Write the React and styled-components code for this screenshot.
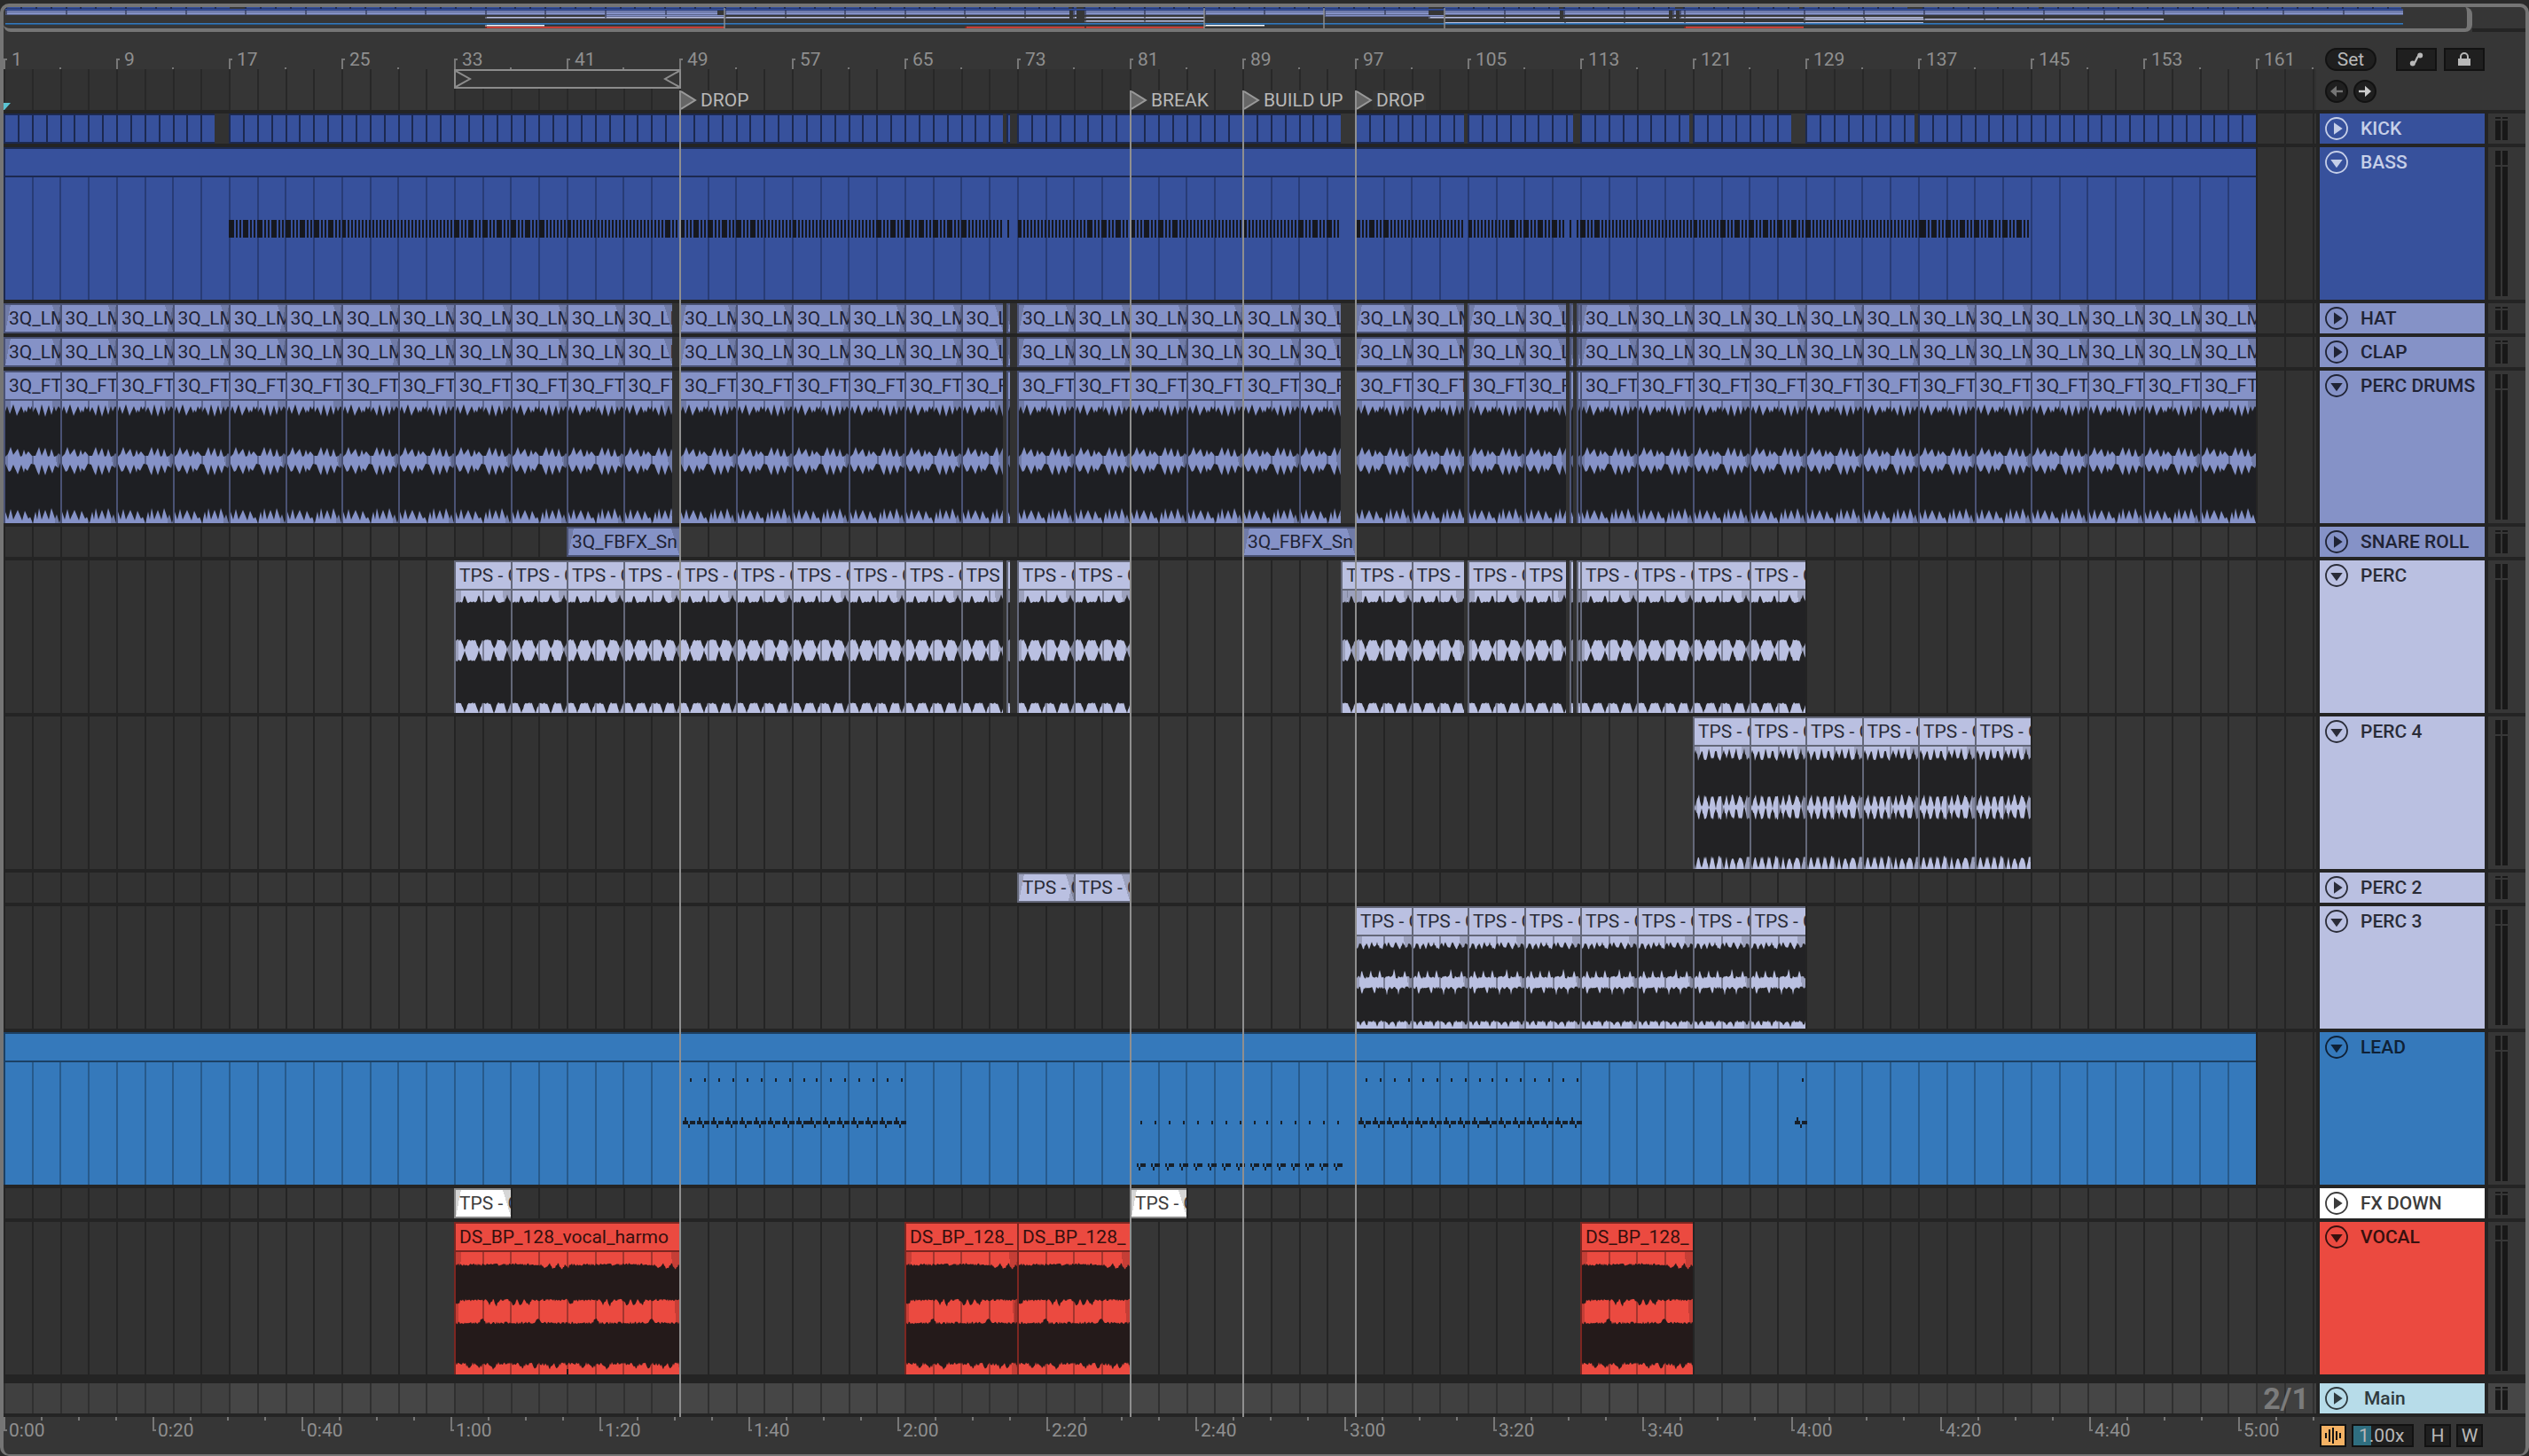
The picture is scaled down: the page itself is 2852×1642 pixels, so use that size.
import React from 'react';
import styled, { createGlobalStyle, css } from 'styled-components';

const VISIBLE_BARS = 164.28;
const BAR = 15.875;
const BARS_PER_20S = 10.583;

const frameGrey = '#757575';
const panel = '#363636';
const gapDark = '#242424';
const tickGrey = '#777777';
const textGrey = '#8f8f8f';
const textLight = '#b8b8b8';

const pct = bars => `${(bars / VISIBLE_BARS) * 100}%`;

const GlobalStyle = createGlobalStyle`
    * {
        box-sizing: border-box;
    }
    body {
        margin: 0;
        background: #2a2a2a;
        font-family: Roboto, "Liberation Sans", sans-serif;
        font-size: 21px;
    }
    button, input {
        margin: 0;
        padding: 0;
        font: inherit;
    }
`;

/* ---------- data ---------- */

const palette = {
    blue: { fill: '#37519c', edge: '#1c2950', line: '#283c76', text: '#c6cfe8', wave: '#16181f' },
    lavender: { fill: '#8592c7', edge: '#4a5274', line: '#5c668e', text: '#1f2335', wave: '#1e1f23' },
    pale: { fill: '#bac0e1', edge: '#646879', line: '#7c8097', text: '#2a2c38', wave: '#222224' },
    sky: { fill: '#3579bb', edge: '#1c4165', line: '#275a8b', text: '#0f2136', wave: '#17202a' },
    white: { fill: '#ffffff', edge: '#8a8a8a', line: '#8a8a8a', text: '#3c3c3c', wave: '#222222' },
    red: { fill: '#eb4a40', edge: '#7d2621', line: '#a3352e', text: '#36100e', wave: '#241a1a' },
    ice: { fill: '#b7dce9', edge: '#5f7379', line: '#5f7379', text: '#2f3a3e', wave: '#222222' },
};

const split = (ranges, step) => ranges.flatMap(([from, to]) => {
    const clips = [];
    for (let start = from; start < to; start += step) {
        clips.push({
            start,
            end: Math.min(start + step, to),
            first: start === from,
            last: start + step >= to,
        });
    }
    return clips;
});

const kickRanges = [
    [1, 16], [17, 72], [72.25, 72.5], [73, 96], [97, 104.75], [105, 112.5],
    [113, 120.75], [121, 128], [129, 136.75], [137, 161],
];
const hatRanges = [
    [1, 48.5], [49, 72], [72.25, 72.5], [73, 96], [97, 104.75], [105, 112],
    [112.25, 112.5], [112.75, 113], [113, 161],
];
const percRanges = [
    [33, 72], [72.25, 72.5], [73, 81], [96, 97], [97, 104.75], [105, 112],
    [112.25, 112.5], [112.75, 113], [113, 129],
];

const even = x => Math.round(x / 2) * 2;
const barX = bar => (bar - 1) * BAR;

const bassNotes = () => {
    const silent = [[72, 72.25], [72.5, 73], [96, 97], [104.75, 105], [112, 112.25], [112.5, 112.75]];
    const notes = [];
    for (let bar = 17; bar < 145; bar += 0.25) {
        if (silent.some(([a, b]) => bar >= a && bar < b)) {
            continue;
        }
        const x = even(barX(bar));
        const heavy = bar % 1 === 0 && (x - 255) % 238 < 116;
        notes.push([x, 48, heavy ? 6 : 2, 20]);
    }
    return notes;
};

const leadNotes = () => {
    const notes = [];
    const high = bar => {
        const x = even(barX(bar));
        notes.push([x + 12, 18, 2, 4], [x + 6, 62, 2, 4], [x + 4, 66, 6, 4], [x + 10, 70, 2, 4], [x + 12, 66, 6, 4]);
    };
    const low = bar => {
        const x = even(barX(bar));
        notes.push([x + 12, 66, 2, 4], [x + 8, 114, 2, 4], [x + 12, 114, 6, 4], [x + 10, 118, 2, 4]);
    };
    for (let i = 0; i < 16; i++) {
        high(49 + i);
        high(97 + i);
    }
    for (let i = 0; i < 15; i++) {
        low(81 + i);
    }
    high(128);
    return notes;
};

// An edge is either a list of points over one period, or
// [resting level, level at the tips, tip positions, tip half width, roughness]
const waves = {
    drums: {
        period: 64,
        height: 138,
        edges: [
            { points: [0, 12, 2, 6, 5, 15, 9, 4, 13, 17, 18, 6, 21, 14, 22, 10, 24, 13, 26, 6, 28, 10, 30, 6, 31, 13, 34, 7, 38, 17, 41, 4, 45, 18, 49, 5, 52, 16, 55, 6, 57, 12, 60, 6, 64, 12] },
            { points: [0, 63, 3, 60, 6, 52, 9, 61, 14, 54, 17, 63, 19, 62, 21, 55, 23, 61, 26, 57, 30, 62, 34, 62, 38, 52, 41, 62, 45, 53, 48, 63, 50, 62, 52, 54, 55, 63, 58, 62, 60, 59, 64, 63] },
            { points: [0, 71, 4, 80, 6, 79, 9, 72, 14, 83, 18, 72, 21, 81, 22, 76, 25, 79, 29, 71, 33, 72, 36, 80, 38, 84, 41, 72, 45, 84, 49, 72, 53, 82, 56, 73, 60, 76, 62, 70, 64, 71] },
            { points: [0, 125, 3, 134, 6, 122, 9, 134, 14, 123, 19, 135, 22, 124, 26, 133, 28, 131, 31, 138, 34, 125, 36, 134, 38, 121, 41, 134, 45, 123, 49, 134, 52, 121, 56, 133, 58, 128, 61, 138, 64, 125] },
        ],
    },
    perc: {
        period: 64,
        height: 138,
        edges: [
            [13, 5, [10, 26, 43, 58], 3, 2],
            [56, 66, [10, 26, 43, 58], 4, 2],
            [79, 68, [10, 26, 43, 58], 4, 2],
            [127, 138, [10, 26, 43, 58], 4, 2],
        ],
    },
    shaker: {
        period: 64,
        height: 138,
        edges: [
            [14, 3, [1, 8, 16, 24, 33, 39, 47, 56], 3, 4],
            [56, 68, [1, 8, 16, 24, 33, 39, 47, 56], 3, 4],
            [81, 69, [1, 8, 16, 24, 33, 39, 47, 56], 3, 4],
            [125, 138, [1, 8, 16, 24, 33, 39, 47, 56], 3, 4],
        ],
    },
    top: {
        period: 64,
        height: 104,
        edges: [
            [13, 7, [4, 11, 17, 23, 32, 36, 44, 52, 59], 3, 3],
            [46, 38, [6, 16, 26, 42, 54], 2, 3],
            [58, 65, [6, 20, 34, 47], 2, 3],
            [96, 101, [4, 11, 23, 36, 44, 59], 2, 3],
        ],
    },
    vocal: {
        period: 128,
        height: 138,
        edges: [
            [14, 19, [100, 110, 120, 127], 4, 3],
            [54, 60, [2, 38, 46, 65, 73, 82], 4, 3],
            [80, 74, [30, 93], 4, 3],
            [126, 131, [15, 27, 42, 75, 90, 106, 114], 4, 4],
        ],
    },
};

const noise = n => {
    const v = Math.sin(n * 127.1 + 11.7) * 43758.5453;
    return v - Math.floor(v) - 0.5;
};

const edgeLevel = (edge, x, seed) => {
    if (edge.points) {
        const p = edge.points;
        let i = 0;
        while (p[i + 2] < x) {
            i += 2;
        }
        return p[i + 1] + (p[i + 3] - p[i + 1]) * (x - p[i]) / (p[i + 2] - p[i]);
    }
    const [rest, tip, at, half, rough] = edge;
    const pull = Math.max(0, ...at.map(t => 1 - Math.abs(x - t) / half));
    return rest + (tip - rest) * pull + noise(x + seed * 300) * rough;
};

const wavePath = (wave, width) => {
    const band = (upper, lower) => {
        const there = [];
        const back = [];
        for (let x = 0; x <= width; x++) {
            const local = x % wave.period;
            there.push(`${x} ${edgeLevel(wave.edges[upper], local, upper).toFixed(1)}`);
            back.unshift(`${x} ${edgeLevel(wave.edges[lower], local, lower).toFixed(1)}`);
        }
        return `M${there.join('L')}L${back.join('L')}Z`;
    };
    return band(0, 1) + band(2, 3);
};

const tracks = [
    { name: 'KICK', color: 'blue', clips: split(kickRanges, 1) },
    { name: 'BASS', color: 'blue', open: true, body: 138, notes: bassNotes(), clips: split([[1, 161]], 160) },
    { name: 'HAT', color: 'lavender', label: '3Q_LM', fades: true, clips: split(hatRanges, 4) },
    { name: 'CLAP', color: 'lavender', label: '3Q_LM', fades: true, clips: split(hatRanges, 4) },
    { name: 'PERC DRUMS', color: 'lavender', label: '3Q_FT', fades: true, open: true, body: 138, wave: 'drums', clips: split(hatRanges, 4) },
    { name: 'SNARE ROLL', color: 'lavender', label: '3Q_FBFX_Sn', fades: true, clips: split([[41, 49], [89, 97]], 8) },
    { name: 'PERC', color: 'pale', label: 'TPS - C', fades: true, open: true, body: 138, wave: 'perc', clips: split(percRanges, 4) },
    { name: 'PERC 4', color: 'pale', label: 'TPS - C', fades: true, open: true, body: 138, wave: 'shaker', clips: split([[121, 145]], 4) },
    { name: 'PERC 2', color: 'pale', label: 'TPS - C', fades: true, clips: split([[73, 81]], 4) },
    { name: 'PERC 3', color: 'pale', label: 'TPS - C', fades: true, open: true, body: 104, wave: 'top', clips: split([[97, 129]], 4) },
    { name: 'LEAD', color: 'sky', open: true, body: 138, notes: leadNotes(), clips: split([[1, 161]], 160) },
    { name: 'FX DOWN', color: 'white', label: 'TPS - C', fades: true, clips: split([[33, 37], [81, 85]], 4) },
    {
        name: 'VOCAL',
        color: 'red',
        label: 'DS_BP_128_',
        fades: true,
        open: true,
        body: 138,
        wave: 'vocal',
        clips: [
            { start: 33, end: 49, first: true, last: true, label: 'DS_BP_128_vocal_harmo' },
            ...split([[65, 81], [113, 121]], 8),
        ],
    },
];

const locators = [
    { bar: 49, name: 'DROP' },
    { bar: 81, name: 'BREAK' },
    { bar: 89, name: 'BUILD UP' },
    { bar: 97, name: 'DROP' },
];

const barMarks = Array.from({ length: 21 }, (_, i) => 1 + i * 8);
const timeMarks = Array.from({ length: 16 }, (_, i) => {
    const s = i * 20;
    return `${Math.floor(s / 60)}:${String(s % 60).padStart(2, '0')}`;
});

/* ---------- frame and overview ---------- */

const Frame = styled.main`
    margin-top: 4px;
    border: 4px solid ${frameGrey};
    border-bottom-width: 2px;
    border-radius: 10px;
    background: ${panel};
    overflow: hidden;
`;

const Overview = styled.div`
    display: flex;
    height: 28px;
`;

const OverviewWindow = styled.div`
    position: relative;
    flex: 0 0 97.9%;
    display: grid;
    grid-auto-rows: 1fr;
    padding-left: 2px;
    border: solid ${frameGrey};
    border-width: 0 6px 4px 0;
    border-radius: 0 8px 8px 8px;
`;

const OverviewRest = styled.div`
    flex: 1;
    border-bottom: 4px solid ${gapDark};
`;

const OverviewRow = styled.div`
    display: flex;
    min-height: 0;
`;

const OverviewClip = styled.div`
    flex: none;
    border-left: ${props => props.$line ? '2px' : '0'} solid ${props => props.$color.edge};
    background: linear-gradient(${props => props.$color.fill} 60%, ${props => props.$color.line} 60%);
`;

const OverviewLocator = styled.div`
    position: absolute;
    top: 1px;
    bottom: 0;
    width: 2px;
    background: rgba(144, 144, 144, 0.7);
`;

/* ---------- shared grid ---------- */

const columns = css`
    display: grid;
    grid-template-columns: minmax(0, 1fr) 186px 42px;
    column-gap: 4px;
`;

const barGrid = (dark, light, line) => css`
    background:
        repeating-linear-gradient(to right, ${line} 0 2px, transparent 2px ${pct(2)}),
        repeating-linear-gradient(to right, ${dark} 0 ${pct(16)}, ${light} ${pct(16)} ${pct(32)});
`;

const Arrangement = styled.section`
    position: relative;
`;

/* ---------- top ruler ---------- */

const RulerRow = styled.header`
    ${columns}
    height: 88px;
`;

const Ruler = styled.div`
    position: relative;
    overflow: hidden;
    display: flex;
    flex-direction: column;
`;

const BarNumbers = styled.div`
    display: flex;
    align-items: flex-end;
    height: 42px;
`;

const BarMark = styled.div`
    flex: 0 0 ${pct(8)};
    display: flex;
    align-items: flex-end;
    gap: 5px;
    line-height: 22px;
    color: ${textGrey};
    background: linear-gradient(${tickGrey}, ${tickGrey}) 50% 100% / 2px 2px no-repeat;
`;

const BarTick = styled.i`
    width: 4px;
    height: 12px;
    border: solid ${tickGrey};
    border-width: 2px 0 0 2px;
`;

const RulerGrid = styled.div`
    flex: 1;
    ${barGrid('#323232', '#363636', '#282828')}
`;

const LoopBrace = styled.div`
    position: absolute;
    top: 42px;
    left: ${pct(32)};
    width: calc(${pct(16)} + 2px);
    height: 22px;
    display: flex;
    justify-content: space-between;
    border: 2px solid #8c8c8c;
    background: ${panel};
`;

const StartMarker = styled.svg`
    position: absolute;
    left: 0;
    bottom: 0;
`;

/* ---------- buttons at the right ---------- */

const Controls = styled.div`
    grid-column: 2 / 4;
    display: flex;
    flex-direction: column;
    gap: 10px;
    padding: 18px 0 0 6px;
`;

const ControlLine = styled.div`
    display: flex;
    gap: ${props => props.$gap};
`;

const DarkButton = styled.button`
    display: flex;
    align-items: center;
    justify-content: center;
    width: ${props => props.$width};
    height: 26px;
    margin-right: ${props => props.$push || '0'};
    border: 2px solid #121212;
    border-radius: ${props => props.$round ? '13px' : '0'};
    background: ${props => props.$on ? '#f5b264' : '#1f1f1f'};
    line-height: 22px;
    color: ${textLight};
`;

/* ---------- tracks ---------- */

const TrackList = styled.div`
    display: flex;
    flex-direction: column;
    gap: 4px;
    padding: 4px 0;
    background: ${gapDark};
`;

const TrackRow = styled.div`
    ${columns}
    margin-top: ${props => props.$main ? '6px' : '0'};
`;

const Lane = styled.div`
    display: flex;
    min-height: 34px;
    overflow: hidden;
    ${props => props.$main ? barGrid('#404040', '#464646', '#303030') : barGrid('#323232', '#363636', gapDark)}
`;

const fadeIn = 'linear-gradient(to bottom right, rgba(0, 0, 0, 0.16) 50%, transparent 50%) 0 0 / 6px 100% no-repeat';
const fadeOut = 'linear-gradient(to bottom left, rgba(0, 0, 0, 0.16) 50%, transparent 50%) 100% 0 / 9px 100% no-repeat';
const crossIn = 'linear-gradient(to top left, rgba(0, 0, 0, 0.16) 50%, transparent 50%) 100% 0 / 6px 100% no-repeat';

const fadeLayers = props => {
    if (!props.$fades) {
        return '';
    }
    const layers = [fadeOut];
    if (props.$first) {
        layers.push(fadeIn);
    }
    if (!props.$last) {
        layers.push(crossIn);
    }
    return `${layers.join(', ')},`;
};

const Clip = styled.div`
    flex: none;
    display: flex;
    flex-direction: column;
    overflow: hidden;
    border: solid ${props => props.$color.edge};
    border-width: ${props => props.$open ? '2px 0 0 2px' : '2px 0 2px 2px'};
    background: ${props => props.$color.fill};
    color: ${props => props.$color.text};
`;

const ClipLabel = styled.div`
    height: 30px;
    padding-left: 4px;
    overflow: hidden;
    line-height: 30px;
    white-space: nowrap;
    background: ${fadeLayers} ${props => props.$color.fill};
`;

const ClipBody = styled.div`
    border-top: 2px solid ${props => props.$color.edge};
    background:
        ${fadeLayers}
        repeating-linear-gradient(
            to right,
            transparent 0 calc((100% + 2px) * ${props => 2 / props.$bars} - 2px),
            ${props => props.$color.line} calc((100% + 2px) * ${props => 2 / props.$bars} - 2px) calc((100% + 2px) * ${props => 2 / props.$bars})
        );
`;

const Drawing = styled.svg`
    display: block;
    width: 100%;
`;

const TrackHeader = styled.div`
    display: flex;
    align-items: flex-start;
    gap: ${props => props.$main ? '18px' : '14px'};
    padding: 4px 0 4px 6px;
    background: ${props => props.$color.fill};
    color: ${props => props.$color.text};
    font-weight: 500;
    line-height: 26px;
    white-space: nowrap;
`;

const FoldButton = styled.button`
    display: flex;
    border: 0;
    background: none;
    color: inherit;
`;

const MeterCell = styled.div`
    display: flex;
    gap: 2px;
    padding: 4px 8px;
    background: ${props => props.$main ? '#464646' : panel};
`;

const Meter = styled.div`
    width: 6px;
    background: linear-gradient(
        #181818 ${props => props.$peak},
        ${panel} ${props => props.$peak} calc(${props => props.$peak} + 2px),
        #181818 calc(${props => props.$peak} + 2px)
    );
`;

const Division = styled.span`
    margin-left: auto;
    padding-right: 8px;
    font-size: 34px;
    font-weight: 700;
    line-height: 34px;
    color: #7b7b7b;
`;

/* ---------- locators ---------- */

const LocatorLayer = styled.div`
    position: absolute;
    top: 66px;
    right: 236px;
    bottom: 42px;
    left: 0;
    pointer-events: none;
`;

const Locator = styled.div`
    position: absolute;
    top: 0;
    bottom: 0;
    display: flex;
    align-items: flex-start;
    border-left: 2px solid #8f8f8f;
`;

const LocatorName = styled.span`
    padding: 0 2px 0 4px;
    background: ${panel};
    line-height: 22px;
    white-space: nowrap;
    color: ${textLight};
`;

/* ---------- bottom ruler ---------- */

const FooterRow = styled.footer`
    ${columns}
    height: 42px;
`;

const TimeRuler = styled.div`
    position: relative;
    display: flex;
    overflow: hidden;
`;

const TimeMark = styled.div`
    flex: 0 0 ${pct(BARS_PER_20S)};
    display: flex;
    gap: 2px;
    line-height: 22px;
    color: ${textGrey};
    background: repeating-linear-gradient(to right, ${tickGrey} 0 2px, transparent 2px 25%) 0 0 / 100% 4px no-repeat;

    span {
        padding-top: 4px;
    }
`;

const TimeTick = styled.i`
    width: 4px;
    height: 16px;
    border: solid ${tickGrey};
    border-width: 0 0 2px 2px;
`;

const FooterControls = styled.div`
    grid-column: 2 / 4;
    display: flex;
    gap: 6px;
    padding-top: 8px;
`;

const SpeedInput = styled.input`
    width: 70px;
    height: 26px;
    margin-right: 6px;
    padding-left: 6px;
    border: 2px solid #121212;
    background: linear-gradient(to right, #2f6e80 20px, #1f1f1f 20px);
    color: ${textLight};
`;

/* ---------- components ---------- */

const FoldIcon = ({ open }) => (
    <svg width="26" height="26" viewBox="0 0 26 26" aria-hidden="true">
        <circle cx="13" cy="13" r="12" fill="none" stroke="currentColor" strokeWidth="1.8" />
        <path d={open ? 'M6.3 10H19.7L13 19.3Z' : 'M10 6.3L19.7 13L10 19.7Z'} fill="currentColor" />
    </svg>
);

const ArrowIcon = ({ left, color }) => (
    <svg width="20" height="20" viewBox="0 0 20 20" aria-hidden="true">
        <g transform={left ? 'matrix(-1 0 0 1 20 0)' : undefined} fill={color}>
            <rect x="3" y="8.8" width="8" height="2.4" />
            <path d="M10 3.8L17 10L10 16.2Z" />
        </g>
    </svg>
);

const ClipDrawing = ({ track, clip }) => {
    const width = (clip.end - clip.start) * BAR - 2;
    const color = palette[track.color];
    if (track.notes) {
        return (
            <Drawing viewBox={`2 0 ${width} ${track.body}`} height={track.body} preserveAspectRatio="none" shapeRendering="crispEdges">
                {track.notes.map(([x, y, w, h], i) => <rect key={i} x={x} y={y} width={w} height={h} fill={color.wave} />)}
            </Drawing>
        );
    }
    return (
        <Drawing viewBox={`0 0 ${width} ${track.body}`} height={track.body} preserveAspectRatio="none">
            <path d={wavePath(waves[track.wave], Math.ceil(width))} fill={color.wave} />
            {track.wave === 'vocal' && width > 130 && <rect x="125" y="132" width="2" height="6" fill={color.wave} />}
        </Drawing>
    );
};

const Track = ({ track }) => {
    const color = palette[track.color];
    return (
        <TrackRow>
            <Lane>
                {track.clips.map((clip, i) => {
                    const previous = i ? track.clips[i - 1].end : 1;
                    const fades = { $first: clip.first, $last: clip.last };
                    return (
                        <Clip
                            key={clip.start}
                            $color={color}
                            $open={track.open}
                            style={{ marginLeft: pct(clip.start - previous), width: pct(clip.end - clip.start) }}
                        >
                            <ClipLabel $color={color} $fades={track.fades && !track.open} {...fades}>
                                {clip.end - clip.start >= 1 && (clip.label || track.label)}
                            </ClipLabel>
                            {track.open && (
                                <ClipBody $color={color} $fades={track.fades} $bars={clip.end - clip.start} {...fades}>
                                    <ClipDrawing track={track} clip={clip} />
                                </ClipBody>
                            )}
                        </Clip>
                    );
                })}
            </Lane>
            <TrackHeader $color={color}>
                <FoldButton aria-label={`Fold ${track.name}`}><FoldIcon open={track.open} /></FoldButton>
                <span>{track.name}</span>
            </TrackHeader>
            <MeterCell>
                <Meter $peak={track.open ? '16px' : '2px'} />
                <Meter $peak={track.open ? '16px' : '2px'} />
            </MeterCell>
        </TrackRow>
    );
};

const App = () => (
    <>
        <GlobalStyle />
        <Frame>
            <Overview>
                <OverviewWindow>
                    {tracks.map(track => (
                        <OverviewRow key={track.name}>
                            {track.clips.map((clip, i) => (
                                <OverviewClip
                                    key={clip.start}
                                    $color={palette[track.color]}
                                    $line={clip.end - clip.start < 100}
                                    style={{
                                        marginLeft: pct(clip.start - (i ? track.clips[i - 1].end : 1)),
                                        width: pct(clip.end - clip.start),
                                    }}
                                />
                            ))}
                        </OverviewRow>
                    ))}
                    {locators.map(({ bar }) => <OverviewLocator key={bar} style={{ left: pct(bar - 1) }} />)}
                </OverviewWindow>
                <OverviewRest />
            </Overview>

            <Arrangement>
                <RulerRow>
                    <Ruler>
                        <BarNumbers>
                            {barMarks.map(bar => <BarMark key={bar}><BarTick />{bar}</BarMark>)}
                        </BarNumbers>
                        <RulerGrid />
                        <LoopBrace>
                            <svg width="18" height="18" fill="none" stroke="#8c8c8c" strokeWidth="2" aria-hidden="true">
                                <path d="M0 0L16 9L0 18" />
                            </svg>
                            <svg width="18" height="18" fill="none" stroke="#8c8c8c" strokeWidth="2" aria-hidden="true">
                                <path d="M18 0L2 9L18 18" />
                            </svg>
                        </LoopBrace>
                        <StartMarker width="8" height="8" aria-hidden="true">
                            <path d="M0 0H8L1 8H0Z" fill="#5bc4d4" />
                        </StartMarker>
                    </Ruler>
                    <Controls>
                        <ControlLine $gap="8px">
                            <DarkButton $width="58px" $round $push="14px">Set</DarkButton>
                            <DarkButton $width="46px" aria-label="Automation mode">
                                <svg width="18" height="18" viewBox="0 0 18 18" aria-hidden="true">
                                    <path d="M5 14C10 12 8 6 13 4" fill="none" stroke={textLight} strokeWidth="2.2" />
                                    <circle cx="4.8" cy="13.4" r="3" fill={textLight} />
                                    <circle cx="13.2" cy="4.6" r="3" fill={textLight} />
                                </svg>
                            </DarkButton>
                            <DarkButton $width="46px" aria-label="Lock envelopes">
                                <svg width="16" height="18" viewBox="0 0 16 18" aria-hidden="true">
                                    <path d="M4 8V6a4 4 0 0 1 8 0v2" fill="none" stroke={textLight} strokeWidth="2" />
                                    <rect x="1" y="8" width="14" height="8" fill={textLight} />
                                </svg>
                            </DarkButton>
                        </ControlLine>
                        <ControlLine $gap="6px">
                            <DarkButton $width="26px" $round aria-label="Previous locator"><ArrowIcon left color="#757575" /></DarkButton>
                            <DarkButton $width="26px" $round aria-label="Next locator"><ArrowIcon color="#cccccc" /></DarkButton>
                        </ControlLine>
                    </Controls>
                </RulerRow>

                <TrackList>
                    {tracks.map(track => <Track key={track.name} track={track} />)}
                    <TrackRow $main>
                        <Lane $main><Division>2/1</Division></Lane>
                        <TrackHeader $main $color={palette.ice}>
                            <FoldButton aria-label="Fold Main"><FoldIcon /></FoldButton>
                            <span>Main</span>
                        </TrackHeader>
                        <MeterCell $main>
                            <Meter $peak="2px" />
                            <Meter $peak="2px" />
                        </MeterCell>
                    </TrackRow>
                </TrackList>

                <FooterRow>
                    <TimeRuler>
                        {timeMarks.map(time => <TimeMark key={time}><TimeTick /><span>{time}</span></TimeMark>)}
                    </TimeRuler>
                    <FooterControls>
                        <DarkButton $width="30px" $on aria-label="Show waveforms">
                            <svg width="22" height="22" viewBox="0 0 22 22" stroke="#121212" strokeWidth="2" aria-hidden="true">
                                <path d="M3 8V14M7 4V18M11 2V20M15 6V16M19 8V14" />
                            </svg>
                        </DarkButton>
                        <SpeedInput aria-label="Waveform zoom" defaultValue="1.00x" />
                        <DarkButton $width="30px">H</DarkButton>
                        <DarkButton $width="30px">W</DarkButton>
                    </FooterControls>
                </FooterRow>

                <LocatorLayer>
                    {locators.map(({ bar, name }) => (
                        <Locator key={bar} style={{ left: pct(bar - 1) }}>
                            <svg width="18" height="22" aria-hidden="true">
                                <path d="M0 1L16 11L0 21" fill="#666666" stroke="#999999" strokeWidth="2" />
                            </svg>
                            <LocatorName>{name}</LocatorName>
                        </Locator>
                    ))}
                </LocatorLayer>
            </Arrangement>
        </Frame>
    </>
);

export default App;
